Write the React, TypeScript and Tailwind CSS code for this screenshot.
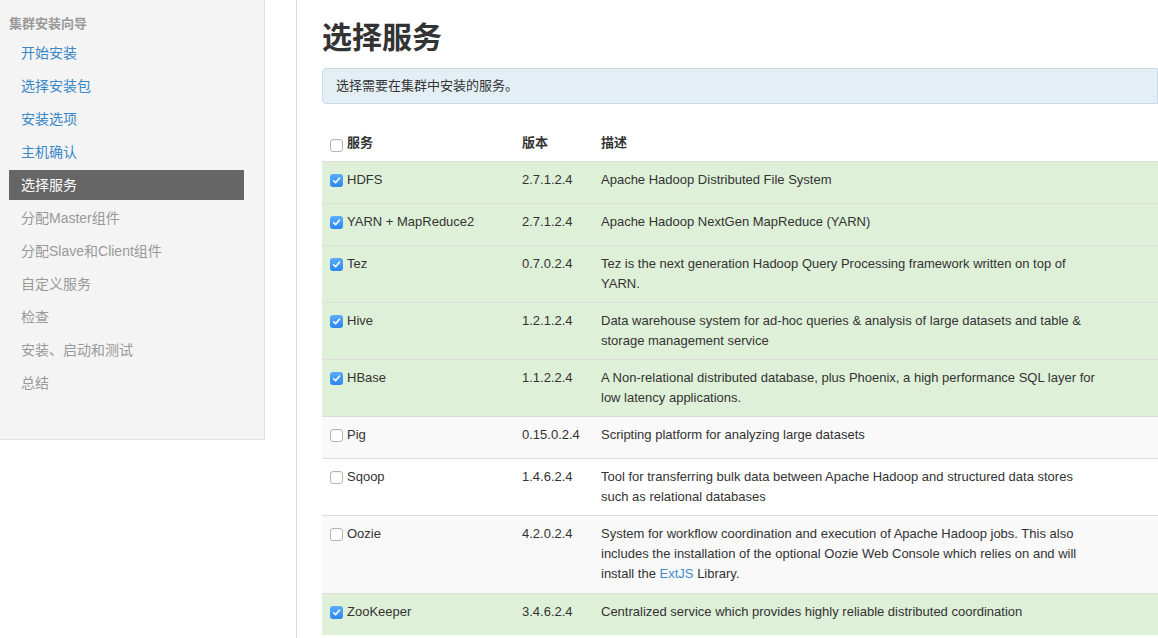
import React from 'react';

interface Service {
  name: string;
  version: string;
  desc: React.ReactNode[];
  checked: boolean;
}

const steps = [
  { label: '开始安装', state: 'done' },
  { label: '选择安装包', state: 'done' },
  { label: '安装选项', state: 'done' },
  { label: '主机确认', state: 'done' },
  { label: '选择服务', state: 'active' },
  { label: '分配Master组件', state: 'todo' },
  { label: '分配Slave和Client组件', state: 'todo' },
  { label: '自定义服务', state: 'todo' },
  { label: '检查', state: 'todo' },
  { label: '安装、启动和测试', state: 'todo' },
  { label: '总结', state: 'todo' },
];

const services: Service[] = [
  { name: 'HDFS', version: '2.7.1.2.4', desc: ['Apache Hadoop Distributed File System'], checked: true },
  { name: 'YARN + MapReduce2', version: '2.7.1.2.4', desc: ['Apache Hadoop NextGen MapReduce (YARN)'], checked: true },
  {
    name: 'Tez',
    version: '0.7.0.2.4',
    desc: ['Tez is the next generation Hadoop Query Processing framework written on top of', 'YARN.'],
    checked: true,
  },
  {
    name: 'Hive',
    version: '1.2.1.2.4',
    desc: ['Data warehouse system for ad-hoc queries & analysis of large datasets and table &', 'storage management service'],
    checked: true,
  },
  {
    name: 'HBase',
    version: '1.1.2.2.4',
    desc: ['A Non-relational distributed database, plus Phoenix, a high performance SQL layer for', 'low latency applications.'],
    checked: true,
  },
  { name: 'Pig', version: '0.15.0.2.4', desc: ['Scripting platform for analyzing large datasets'], checked: false },
  {
    name: 'Sqoop',
    version: '1.4.6.2.4',
    desc: ['Tool for transferring bulk data between Apache Hadoop and structured data stores', 'such as relational databases'],
    checked: false,
  },
  {
    name: 'Oozie',
    version: '4.2.0.2.4',
    desc: [
      'System for workflow coordination and execution of Apache Hadoop jobs. This also',
      'includes the installation of the optional Oozie Web Console which relies on and will',
      <>
        install the <a className="text-[#428bca]">ExtJS</a> Library.
      </>,
    ],
    checked: false,
  },
  {
    name: 'ZooKeeper',
    version: '3.4.6.2.4',
    desc: ['Centralized service which provides highly reliable distributed coordination'],
    checked: true,
  },
];

const CheckBox: React.FC<{ checked: boolean; className?: string }> = ({ checked, className = '' }) =>
  checked ? (
    <span
      className={`flex h-[13px] w-[13px] shrink-0 items-center justify-center rounded-[3px] bg-gradient-to-b from-[#5aacfd] to-[#2a86f3] ${className}`}
    >
      <svg width="9" height="9" viewBox="0 0 9 9" fill="none">
        <path d="M1.6 4.8 L3.6 6.8 L7.4 2.2" stroke="#fff" strokeWidth="1.6" strokeLinecap="round" strokeLinejoin="round" />
      </svg>
    </span>
  ) : (
    <span
      className={`block h-[13px] w-[13px] shrink-0 rounded-[3px] border border-[#b5b5b5] bg-white shadow-[inset_0_1px_1px_rgba(0,0,0,0.05)] ${className}`}
    />
  );

const rowBg = (s: Service, i: number) => {
  if (s.checked) return 'bg-[#dff0d8]';
  return i % 2 === 1 ? 'bg-[#f9f9f9]' : 'bg-white';
};

const App: React.FC = () => {
  return (
    <div className="flex min-h-screen bg-white font-['Liberation_Sans','Noto_Sans_CJK_SC',sans-serif] text-[#333]">
      <div className="w-[297px] shrink-0 border-r border-[#ddd]">
        <aside className="w-[265px] border-r border-b border-[#e3e3e3] bg-[#f4f4f4] pt-[14px] pr-[20px] pb-[38px] pl-[9px]">
          <div className="text-[13px] font-bold leading-5 text-[#999]">集群安装向导</div>
          <ul className="mt-[4px]">
            {steps.map(step => (
              <li
                key={step.label}
                className={`mb-[3px] flex h-[30px] items-center px-[12px] text-[14px] ${
                  step.state === 'active'
                    ? 'bg-[#666] text-white'
                    : step.state === 'done'
                    ? 'text-[#3a87c8]'
                    : 'text-[#999]'
                }`}
              >
                {step.label}
              </li>
            ))}
          </ul>
        </aside>
      </div>

      <main className="min-w-0 flex-1 pt-[20px] pl-[25px]">
        <h1 className="text-[30px] font-bold leading-[36px] text-[#333]">选择服务</h1>
        <div className="mt-[12px] rounded-l-[4px] border border-[#c9dbe6] bg-[#e4eff5] px-[13px] py-[7px] text-[13px] leading-5">
          选择需要在集群中安装的服务。
        </div>

        <table className="mt-[21px] w-full table-fixed border-collapse text-[13px] leading-5">
          <thead>
            <tr>
              <th className="w-[192px] border-b border-[#ddd] px-2 py-2 text-left font-bold">
                <div className="flex items-start gap-[4px]">
                  <CheckBox checked={false} className="mt-[6px]" />
                  <span>服务</span>
                </div>
              </th>
              <th className="w-[79px] border-b border-[#ddd] px-2 py-2 text-left font-bold">版本</th>
              <th className="border-b border-[#ddd] px-2 py-2 text-left font-bold">描述</th>
            </tr>
          </thead>
          <tbody>
            {services.map((s, i) => (
              <tr key={s.name} className={rowBg(s, i)}>
                <td className="border-t border-[#ddd] px-2 py-2 align-top">
                  <div className="flex min-h-[25px] items-start gap-[4px]">
                    <CheckBox checked={s.checked} className="mt-[4px]" />
                    <span className="whitespace-nowrap">{s.name}</span>
                  </div>
                </td>
                <td className="border-t border-[#ddd] px-2 py-2 align-top whitespace-nowrap">{s.version}</td>
                <td className={`border-t border-[#ddd] px-2 pt-2 align-top ${s.desc.length > 2 ? 'pb-[9px]' : 'pb-2'}`}>
                  {s.desc.map((line, j) => (
                    <div key={j} className="whitespace-nowrap">
                      {line}
                    </div>
                  ))}
                </td>
              </tr>
            ))}
          </tbody>
        </table>
      </main>
    </div>
  );
};

export default App;
